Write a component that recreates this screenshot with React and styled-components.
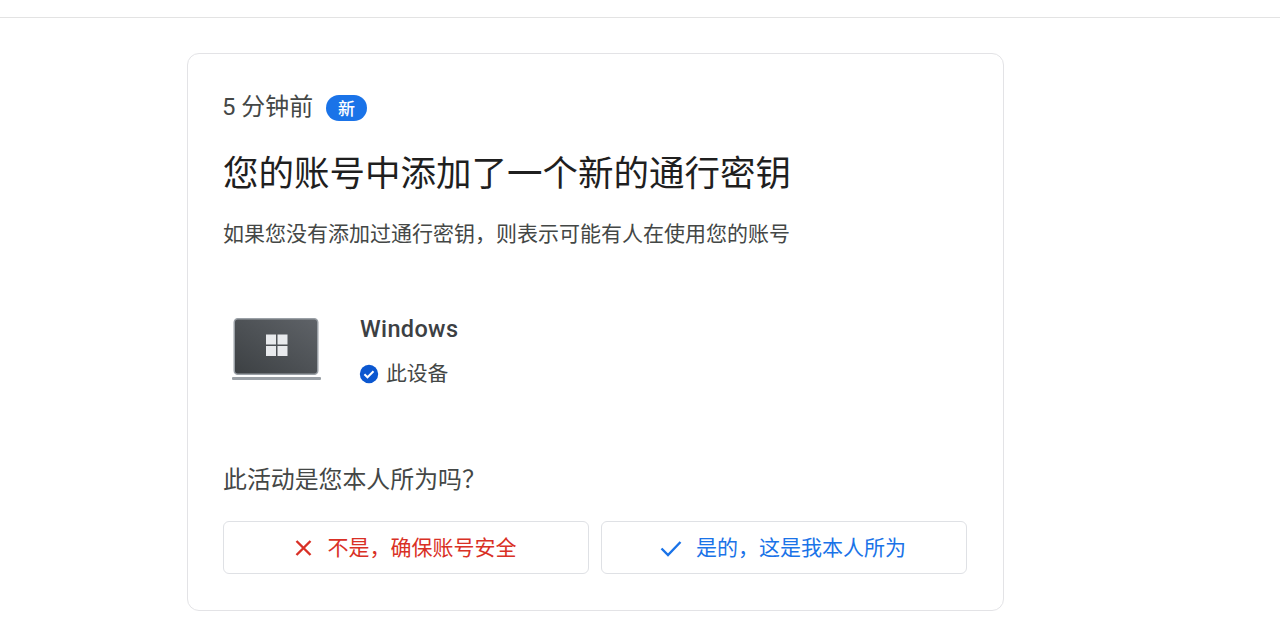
import React from "react";
import styled, { createGlobalStyle } from "styled-components";

const Global = createGlobalStyle`
  html, body { margin: 0; padding: 0; background: #fff; }
  body { font-family: Roboto, "Noto Sans CJK SC", sans-serif; color: #3c4043; overflow: hidden; }
`;
const TopBar = styled.div`height: 17px; border-bottom: 1px solid #e3e3e3;`;
const Page = styled.main`padding: 35px 0 0 187px;`;
const Card = styled.section`
  width: 817px; height: 558px; box-sizing: border-box;
  border: 1px solid #e3e3e6; border-radius: 12px;
  padding: 36px 36px 36px 35px;
  display: flex; flex-direction: column;
`;
const TimeRow = styled.div`display: flex; align-items: center; gap: 13px; height: 35px;`;
const Time = styled.span`font-size: 23.9px; line-height: 35px; color: #444746; margin-left: -1px;`;
const Badge = styled.span`
  width: 41px; height: 26px; border-radius: 13px; background: #1a73e8; color: #fff;
  font-size: 17px; font-weight: 500; display: flex; align-items: center; justify-content: center;
`;
const Title = styled.h1`
  margin: 25px 0 0; font-size: 35.5px; line-height: 48px; font-weight: 400; color: #1f1f1f; white-space: nowrap;
`;
const Sub = styled.p`margin: 21px 0 0; font-size: 21px; line-height: 30px; color: #444746; white-space: nowrap;`;
const Device = styled.div`display: flex; align-items: flex-start; margin-top: 64px; height: 120px;`;
const DeviceIcon = styled.div`width: 137px; box-sizing: border-box; flex: none; padding: 5px 0 0 8px;`;
const DeviceName = styled.div`font-size: 23.5px; line-height: 32px; font-weight: 500; color: #3c4043; letter-spacing: .35px;`;
const ThisDevice = styled.div`
  display: flex; align-items: center; gap: 7px; margin: 14px 0 0 -1px;
  font-size: 20.8px; line-height: 30px; color: #444746;
`;
const Question = styled.div`margin-top: 32px; font-size: 23.9px; line-height: 34px; color: #444746;`;
const Buttons = styled.div`display: grid; grid-template-columns: 366px 366px; gap: 12px; margin-top: 24px;`;
const Btn = styled.button`
  height: 53px; box-sizing: border-box; background: #fff; border: 1px solid #dfe1e5; border-radius: 6px;
  display: flex; align-items: center; justify-content: center; gap: 14px; padding: 0 2px 0 0;
  font-family: inherit; font-size: 21px; color: ${p => p.$color};
`;
const BtnLabel = styled.span`margin-bottom: 3px;`;

export default function App() {
  return (
    <>
      <Global />
      <TopBar />
      <Page>
        <Card>
          <TimeRow>
            <Time>5 分钟前</Time>
            <Badge>新</Badge>
          </TimeRow>
          <Title>您的账号中添加了一个新的通行密钥</Title>
          <Sub>如果您没有添加过通行密钥，则表示可能有人在使用您的账号</Sub>
          <Device>
            <DeviceIcon>
              <svg width="90" height="64" viewBox="0 0 90 64">
                <defs>
                  <linearGradient id="s" x1="0" y1="1" x2="1" y2="0">
                    <stop offset="0" stopColor="#3c4043" />
                    <stop offset="1" stopColor="#5f6368" />
                  </linearGradient>
                </defs>
                <rect x="3.25" y="0.75" width="83.5" height="55.5" rx="3.5" fill="url(#s)" stroke="#9aa0a6" strokeWidth="1.5" />
                <rect x="1" y="59" width="89" height="3" rx="1" fill="#9aa0a6" />
                <g fill="#e8eaed">
                  <rect x="35" y="16.5" width="10" height="10" />
                  <rect x="46.5" y="16.5" width="10" height="10" />
                  <rect x="35" y="28" width="10" height="10" />
                  <rect x="46.5" y="28" width="10" height="10" />
                </g>
              </svg>
            </DeviceIcon>
            <div>
              <DeviceName>Windows</DeviceName>
              <ThisDevice>
                <svg width="20" height="20" viewBox="0 0 20 20">
                  <circle cx="10" cy="10" r="9.2" fill="#0b57d0" />
                  <path d="M5.4 10.2l3.1 3.1 6-6.1" fill="none" stroke="#fff" strokeWidth="2" />
                </svg>
                此设备
              </ThisDevice>
            </div>
          </Device>
          <Question>此活动是您本人所为吗？</Question>
          <Buttons>
            <Btn $color="#d93025">
              <svg width="20" height="20" viewBox="0 0 20 20">
                <path d="M2.5 3l14 14M16.5 3l-14 14" stroke="#d93025" strokeWidth="2.4" fill="none" />
              </svg>
              <BtnLabel>不是，确保账号安全</BtnLabel>
            </Btn>
            <Btn $color="#1a73e8">
              <svg width="22" height="20" viewBox="0 0 22 20">
                <path d="M1.5 10.5l6.5 6.5L20.5 4" stroke="#1a73e8" strokeWidth="2.4" fill="none" />
              </svg>
              <BtnLabel>是的，这是我本人所为</BtnLabel>
            </Btn>
          </Buttons>
        </Card>
      </Page>
    </>
  );
}
